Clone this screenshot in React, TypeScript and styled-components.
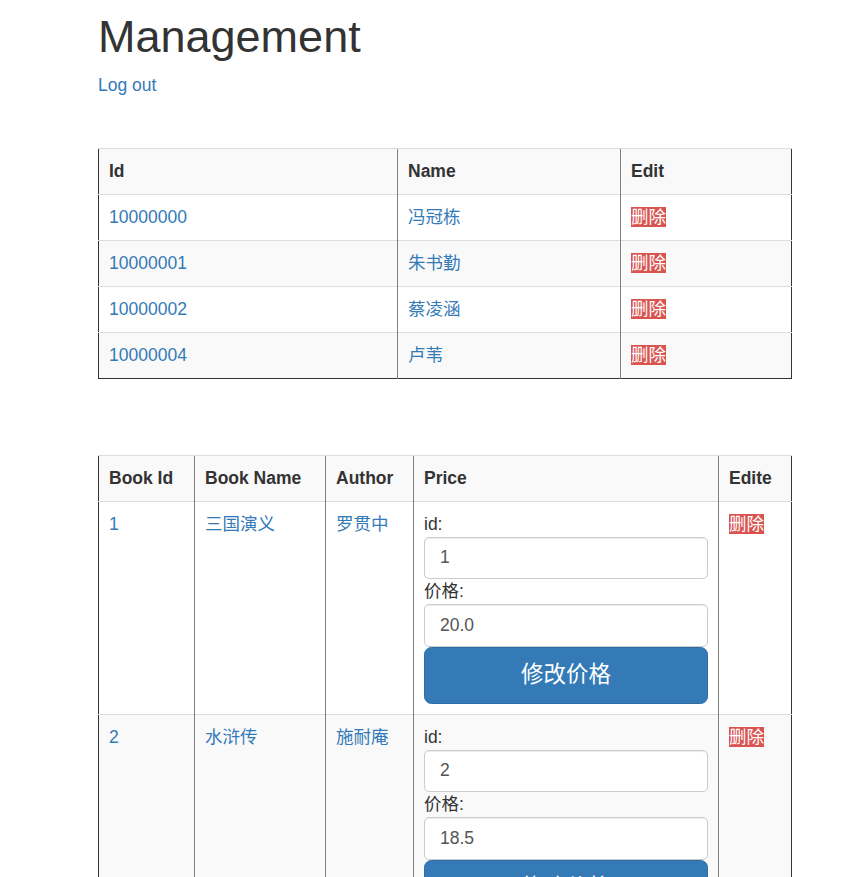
import React from 'react';
import styled, { createGlobalStyle } from 'styled-components';

const GlobalStyle = createGlobalStyle`
  html, body {
    margin: 0;
    padding: 0;
    background: #fff;
  }
  body {
    font-family: "Liberation Sans", Arial, "Noto Sans CJK SC", sans-serif;
    font-size: 17.5px;
    line-height: 25px;
    color: #333;
  }
  * {
    box-sizing: border-box;
  }
`;

const Container = styled.div`
  width: 693px;
  margin-left: 98px;
  padding-top: 12px;
`;

const Title = styled.h1`
  font-size: 45px;
  font-weight: 500;
  line-height: 1.1;
  margin: 0 0 11px 0;
  color: #333;
`;

const Link = styled.a`
  color: #337ab7;
  text-decoration: none;
`;

const Table = styled.table<{ $gap: number }>`
  width: 693px;
  table-layout: fixed;
  border-collapse: collapse;
  border-spacing: 0;
  border-left: 1px solid #333;
  border-right: 1px solid #333;
  border-bottom: 1px solid #333;
  margin-top: ${props => props.$gap}px;
`;

const Row = styled.tr`
  &:nth-child(odd) {
    background: #f9f9f9;
  }
`;

const HeadCell = styled.th<{ $width: number }>`
  width: ${props => props.$width}px;
  text-align: left;
  font-weight: bold;
  padding: 10px;
  vertical-align: top;
  border-top: 1px solid #ddd;
  border-left: 1px solid #808080;
  &:first-child {
    border-left: none;
  }
`;

const Cell = styled.td`
  padding: 10px;
  vertical-align: top;
  border-top: 1px solid #ddd;
  border-left: 1px solid #808080;
  &:first-child {
    border-left: none;
  }
`;

const DeleteTag = styled.a`
  background: #d9534f;
  color: #fff;
  text-decoration: none;
`;

const FieldLabel = styled.label`
  display: block;
  font-weight: normal;
`;

const Input = styled.input`
  display: block;
  width: 100%;
  height: 42.5px;
  padding: 7.5px 15px;
  font-family: inherit;
  font-size: 17.5px;
  line-height: 25px;
  color: #555;
  background: #fff;
  border: 1px solid #ccc;
  border-radius: 5px;
  box-shadow: inset 0 1px 1px rgba(0, 0, 0, 0.075);
  outline: none;
`;

const SubmitButton = styled.button`
  display: block;
  width: 100%;
  padding: 12.5px 20px;
  font-family: inherit;
  font-size: 22.5px;
  line-height: 30px;
  color: #fff;
  background: #337ab7;
  border: 1px solid #2e6da4;
  border-radius: 7.5px;
  cursor: pointer;
`;

const users = [
  { id: '10000000', name: '冯冠栋' },
  { id: '10000001', name: '朱书勤' },
  { id: '10000002', name: '蔡凌涵' },
  { id: '10000004', name: '卢苇' },
];

const books = [
  { id: '1', name: '三国演义', author: '罗贯中', price: '20.0' },
  { id: '2', name: '水浒传', author: '施耐庵', price: '18.5' },
];

export default function App() {
  return (
    <>
      <GlobalStyle />
      <Container>
        <Title>Management</Title>
        <Link href="#">Log out</Link>

        <Table $gap={50}>
          <tbody>
            <Row>
              <HeadCell $width={299}>Id</HeadCell>
              <HeadCell $width={223}>Name</HeadCell>
              <HeadCell $width={171}>Edit</HeadCell>
            </Row>
            {users.map(user => (
              <Row key={user.id}>
                <Cell><Link href="#">{user.id}</Link></Cell>
                <Cell><Link href="#">{user.name}</Link></Cell>
                <Cell><DeleteTag href="#">删除</DeleteTag></Cell>
              </Row>
            ))}
          </tbody>
        </Table>

        <Table $gap={76}>
          <tbody>
            <Row>
              <HeadCell $width={96}>Book Id</HeadCell>
              <HeadCell $width={131}>Book Name</HeadCell>
              <HeadCell $width={88}>Author</HeadCell>
              <HeadCell $width={305}>Price</HeadCell>
              <HeadCell $width={73}>Edite</HeadCell>
            </Row>
            {books.map(book => (
              <Row key={book.id}>
                <Cell><Link href="#">{book.id}</Link></Cell>
                <Cell><Link href="#">{book.name}</Link></Cell>
                <Cell><Link href="#">{book.author}</Link></Cell>
                <Cell>
                  <form onSubmit={e => e.preventDefault()}>
                    <FieldLabel>id:</FieldLabel>
                    <Input defaultValue={book.id} />
                    <FieldLabel>价格:</FieldLabel>
                    <Input defaultValue={book.price} />
                    <SubmitButton type="submit">修改价格</SubmitButton>
                  </form>
                </Cell>
                <Cell><DeleteTag href="#">删除</DeleteTag></Cell>
              </Row>
            ))}
          </tbody>
        </Table>
      </Container>
    </>
  );
}
